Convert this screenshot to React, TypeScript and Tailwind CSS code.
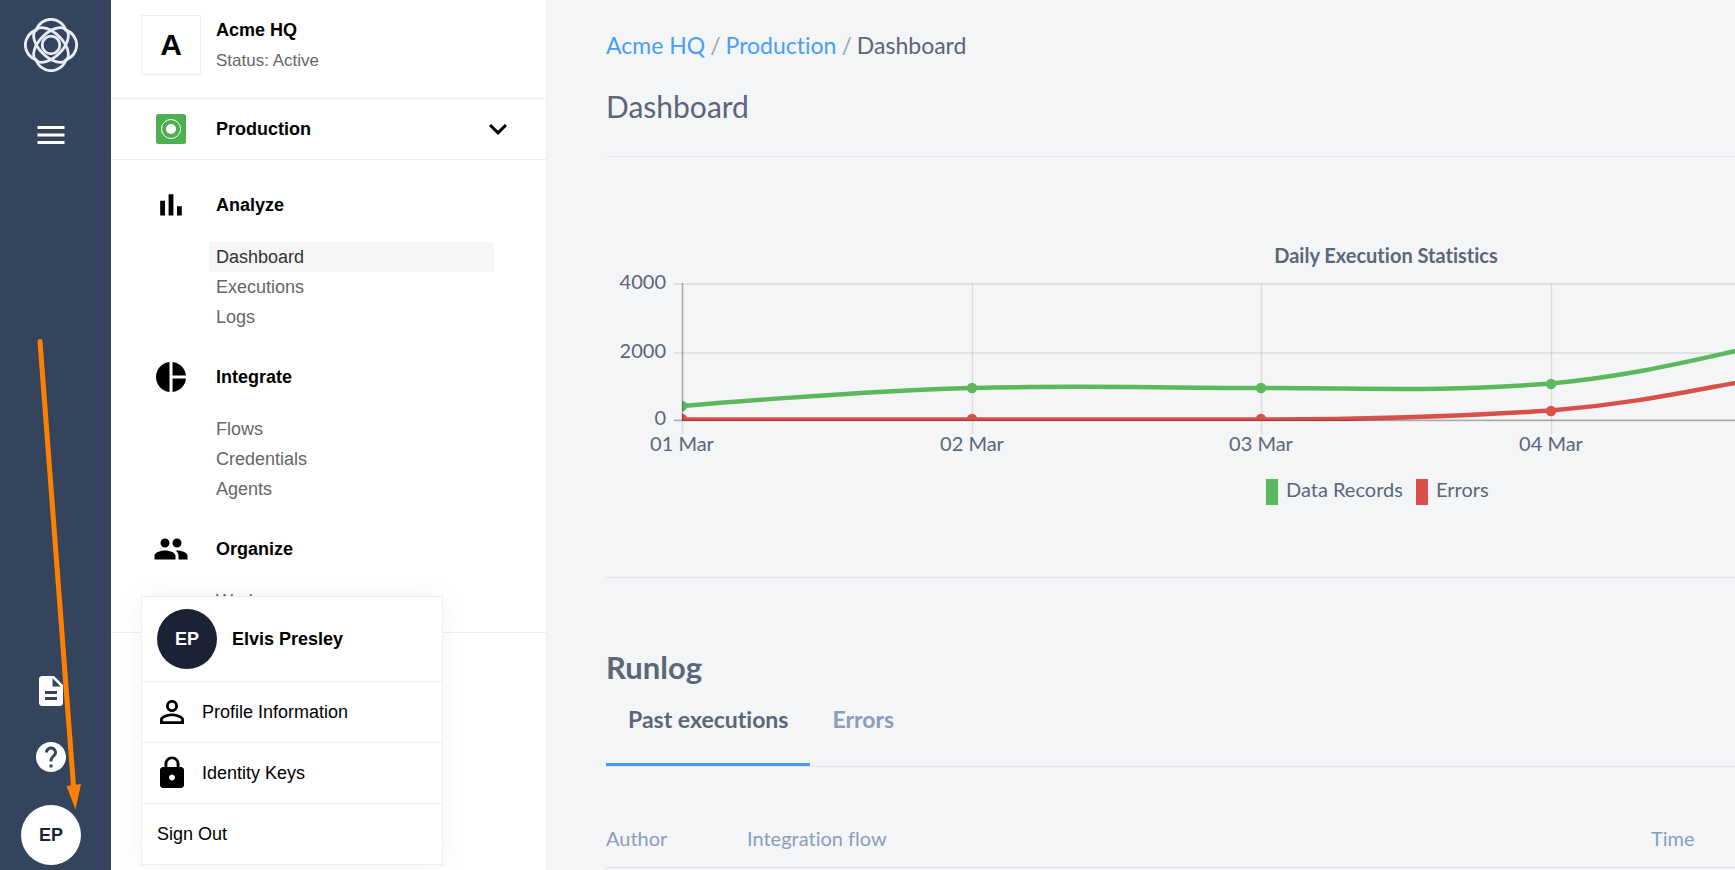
import React from "react";
import {
  MdDescription,
  MdExpandMore,
  MdHelp,
  MdLock,
  MdMenu,
  MdPeople,
  MdPersonOutline,
  MdPieChart,
} from "react-icons/md";

function BarsIcon({ size }: { size: number }) {
  return (
    <svg viewBox="0 0 24 24" width={size} height={size} fill="currentColor">
      <path d="M4.800 9.2h3.200V19H4.800zM10.400 4.800h3.200V19h-3.200zM16 12.800h3.200V19H16z" />
    </svg>
  );
}

const groups = [
  { title: "Analyze", Icon: BarsIcon, items: ["Dashboard", "Executions", "Logs"] },
  { title: "Integrate", Icon: MdPieChart, items: ["Flows", "Credentials", "Agents"] },
  { title: "Organize", Icon: MdPeople, items: ["Workspaces"] },
];

function Logo() {
  return (
    <svg viewBox="-27 -27 54 54" className="size-[54px]" fill="none" stroke="#e8edf5" strokeWidth="2.8">
      <path d="M-14.8 -14.8A15.5 15.5 0 0 1 14.8 -14.8A15.5 15.5 0 0 1 14.8 14.8A15.5 15.5 0 0 1 -14.8 14.8A15.5 15.5 0 0 1 -14.8 -14.8Z" />
      <ellipse rx="21.500" ry="11.800" transform="rotate(45)" />
      <ellipse rx="21.500" ry="11.800" transform="rotate(-45)" />
      <circle r="8.800" />
    </svg>
  );
}

function EnvironmentIcon() {
  return (
    <svg viewBox="0 0 30 30" className="size-[30px]">
      <rect width="30" height="30" rx="2.5" fill="#4caf50" />
      <circle cx="15" cy="15" r="9.5" fill="none" stroke="#fff" strokeWidth="1" />
      <circle cx="15" cy="15" r="5" fill="#fff" />
    </svg>
  );
}

function Rail() {
  return (
    <div className="flex w-[111px] shrink-0 flex-col items-center bg-[#33445c] pt-[18px] pr-[9px] pb-[5px] text-white">
      <a href="#home" aria-label="Home">
        <Logo />
      </a>
      <button aria-label="Toggle menu" className="mt-[45px]">
        <MdMenu size={36} />
      </button>
      <div className="mt-auto flex flex-col items-center gap-[30px]">
        <button aria-label="Documentation">
          <MdDescription size={36} />
        </button>
        <button aria-label="Help">
          <MdHelp size={36} />
        </button>
        <button className="size-[60px] rounded-full bg-white text-lg font-bold text-[#1a2233]">EP</button>
      </div>
    </div>
  );
}

function UserMenu() {
  return (
    <div className="absolute bottom-[5px] left-[30px] w-[302px] divide-y divide-[#eeeeee] border border-[#eeeeee] bg-white text-lg text-black shadow-[0_0_24px_rgba(0,0,0,0.05)]">
      <div className="flex h-[85px] items-center gap-[15px] pl-[15px]">
        <span className="flex size-[60px] items-center justify-center rounded-full bg-[#1a2233] font-bold text-white">
          EP
        </span>
        <span className="font-bold">Elvis Presley</span>
      </div>
      <a href="#profile" className="flex h-[61px] items-center gap-3 pl-3">
        <MdPersonOutline size={36} />
        Profile Information
      </a>
      <a href="#keys" className="flex h-[61px] items-center gap-3 pl-3">
        <MdLock size={36} />
        Identity Keys
      </a>
      <button className="flex h-[60px] w-full items-center pl-[15px]">Sign Out</button>
    </div>
  );
}

function Sidebar() {
  return (
    <aside className="relative w-[436px] shrink-0 border-r border-[#eeeeee] bg-white text-lg">
      <div className="flex h-[99px] gap-[15px] border-b border-[#eeeeee] pt-[15px] pl-[30px]">
        <div className="flex size-[60px] items-center justify-center border border-[#eeeeee] text-3xl font-bold text-black">
          A
        </div>
        <div className="leading-[30px]">
          <div className="font-bold text-black">Acme HQ</div>
          <div className="text-[17px] leading-8 text-[#666666]">Status: Active</div>
        </div>
      </div>
      <button className="flex h-[61px] w-full items-center border-b border-[#eeeeee] pr-[30px] pl-[45px] font-bold text-black">
        <EnvironmentIcon />
        <span className="ml-[30px]">Production</span>
        <MdExpandMore size={36} className="ml-auto" />
      </button>
      <nav className="flex h-[473px] flex-col gap-[27px] overflow-hidden border-b border-[#eeeeee] pt-[27px]">
        {groups.map(({ title, Icon, items }) => (
          <div key={title} className="shrink-0">
            <div className="flex items-center gap-[27px] pl-[42px] font-bold text-black">
              <Icon size={36} />
              {title}
            </div>
            <ul className="mt-[19px] ml-[98px] w-[285px]">
              {items.map((item) => (
                <li key={item}>
                  <a
                    href={"#" + item.toLowerCase()}
                    className={
                      item === "Dashboard"
                        ? "block bg-[#f5f5f5] pl-[7px] leading-[30px] text-[#333333]"
                        : "block pl-[7px] leading-[30px] text-[#666666]"
                    }
                  >
                    {item}
                  </a>
                </li>
              ))}
            </ul>
          </div>
        ))}
      </nav>
      <UserMenu />
    </aside>
  );
}

const days = [
  { x: 76, label: "01 Mar" },
  { x: 366, label: "02 Mar" },
  { x: 655, label: "03 Mar" },
  { x: 945, label: "04 Mar" },
];
const levels = [
  { y: 64, label: "4000" },
  { y: 133, label: "2000" },
  { y: 200, label: "0" },
];
const records = [186, 168, 168, 164];
const errors = [199, 199, 199, 191];

function Chart() {
  return (
    <svg width="1560" height="300" className="block shrink-0 text-xl" fill="#5b6679" role="img" aria-label="Daily Execution Statistics">
      <clipPath id="plot">
        <rect x="76" y="60" width="1484" height="141" />
      </clipPath>
      <g stroke="#000" strokeOpacity="0.1" strokeWidth="1.5">
        {levels.map((l) => (
          <line key={l.y} x1="68" x2="1560" y1={l.y} y2={l.y} />
        ))}
        {days.map((d) => (
          <line key={d.x} x1={d.x + 0.5} x2={d.x + 0.5} y1="64" y2="214" />
        ))}
      </g>
      <g clipPath="url(#plot)" fill="none" strokeWidth="4.5">
        <path
          stroke="#d9504a"
          d="M76 199.5C76 199.5 308 199.5 366 199.5S597 199.5 655 199.5S830 198 945 190.5C1061 181 1118 161 1234 146"
        />
        {errors.map((y, i) => (
          <circle key={i} cx={days[i].x} cy={y} r="5.2" fill="#d9504a" stroke="none" />
        ))}
        <path
          stroke="#5cb85c"
          d="M76 186C76 186 250 171 366 168C482 165 540 168 655 168C771 168 829 172 945 163.500C1061 152 1118 130 1234 110"
        />
        {records.map((y, i) => (
          <circle key={i} cx={days[i].x} cy={y} r="5.2" fill="#5cb85c" stroke="none" />
        ))}
      </g>
      <g stroke="#000" strokeOpacity="0.25" strokeWidth="1.5">
        <line x1="76.500" x2="76.500" y1="63" y2="201" />
        <line x1="68" x2="1560" y1="200.500" y2="200.500" />
      </g>
      <text x="780" y="43" textAnchor="middle" fontWeight="bold">
        Daily Execution Statistics
      </text>
      {levels.map((l) => (
        <text key={l.label} x="60" y={l.y + 5} textAnchor="end">
          {l.label}
        </text>
      ))}
      {days.map((d) => (
        <text key={d.label} x={d.x} y="231" textAnchor="middle">
          {d.label}
        </text>
      ))}
      <rect x="660" y="259" width="12" height="26" fill="#5cb85c" />
      <text x="680" y="277">Data Records</text>
      <rect x="810" y="259" width="12" height="26" fill="#d9504a" />
      <text x="830" y="277">Errors</text>
    </svg>
  );
}

function Main() {
  return (
    <main className="min-w-0 flex-1 overflow-hidden bg-[#f4f5f7] pl-[59px] font-['Lato',sans-serif] text-[#5b6679] [font-variant-ligatures:none]">
      <nav aria-label="Breadcrumb" className="flex h-[90px] items-center gap-[5px] text-[23px]">
        <a href="#hq" className="text-[#4a9df5]">Acme HQ</a>
        <span className="text-[#98a5b9]">/</span>
        <a href="#production" className="text-[#4a9df5]">Production</a>
        <span className="text-[#98a5b9]">/</span>
        <span>Dashboard</span>
      </nav>
      <h1 className="h-[67px] border-b border-[#e6e8eb] text-[30px] leading-8">Dashboard</h1>
      <section className="flex h-[421px] border-b border-[#e2e4e8] pt-[63px]">
        <Chart />
      </section>
      <section>
        <h2 className="pt-[69px] text-[31px] leading-10 font-bold">Runlog</h2>
        <div role="tablist" className="flex h-20 border-b border-[#e2e4e8] text-[23px] font-bold">
          <button role="tab" aria-selected="true" className="border-b-3 border-[#4a9df5] px-[22px] pb-3">
            Past executions
          </button>
          <button role="tab" aria-selected="false" className="border-b-3 border-transparent px-[22px] pb-3 text-[#8b9dba]">
            Errors
          </button>
        </div>
        <table className="mt-[43px] w-[1560px] table-fixed text-left text-xl text-[#8b9dba]">
          <thead>
            <tr className="h-[57px] border-b border-[#e2e4e8]">
              <th className="w-[141px] font-normal">Author</th>
              <th className="w-[904px] font-normal">Integration flow</th>
              <th className="font-normal">Time</th>
            </tr>
          </thead>
        </table>
      </section>
    </main>
  );
}

function Pointer() {
  return (
    <svg width="111" height="830" className="pointer-events-none absolute top-0 left-0" aria-hidden="true">
      <path d="M40 341.500L73.500 786" stroke="#ff8000" strokeWidth="5" strokeLinecap="round" />
      <path d="M66.500 786L81 784L75.500 809.500Z" fill="#ff8000" />
    </svg>
  );
}

export default function App() {
  return (
    <div className="relative flex h-screen overflow-hidden font-['Liberation_Sans',Arial,sans-serif]">
      <Rail />
      <Sidebar />
      <Main />
      <Pointer />
    </div>
  );
}
